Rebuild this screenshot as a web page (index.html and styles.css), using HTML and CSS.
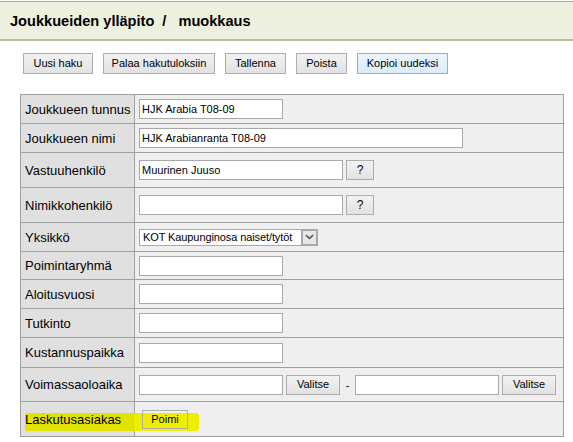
FILE: index.html
```html
<!DOCTYPE html>
<html lang="fi">
<head>
<meta charset="utf-8">
<title>Joukkueiden ylläpito / muokkaus</title>
<link rel="stylesheet" href="styles.css">
</head>
<body>
<header class="page-header">
  <h1 class="title">Joukkueiden ylläpito<span class="sep">/</span>muokkaus</h1>
</header>

<div class="toolbar">
  <button class="btn b-uusi">Uusi haku</button>
  <button class="btn b-palaa">Palaa hakutuloksiin</button>
  <button class="btn b-tallenna">Tallenna</button>
  <button class="btn b-poista">Poista</button>
  <button class="btn btn-active b-kopioi">Kopioi uudeksi</button>
</div>

<div class="form">
  <div class="row h29">
    <div class="label">Joukkueen tunnus</div>
    <div class="value"><input class="field w144" type="text" value="HJK Arabia T08-09"></div>
  </div>
  <div class="row h29">
    <div class="label">Joukkueen nimi</div>
    <div class="value"><input class="field w324" type="text" value="HJK Arabianranta T08-09"></div>
  </div>
  <div class="row h35">
    <div class="label">Vastuuhenkilö</div>
    <div class="value"><input class="field w204" type="text" value="Muurinen Juuso"><button class="btn btn-q">?</button></div>
  </div>
  <div class="row h35">
    <div class="label">Nimikkohenkilö</div>
    <div class="value"><input class="field w204" type="text" value=""><button class="btn btn-q">?</button></div>
  </div>
  <div class="row h29">
    <div class="label">Yksikkö</div>
    <div class="value">
      <div class="select"><span class="select-text">KOT Kaupunginosa naiset/tytöt</span><span class="select-arrow"><svg width="9" height="6" viewBox="0 0 9 6"><path d="M1 1.2 L4.5 4.5 L8 1.2" fill="none" stroke="#555" stroke-width="1.6"/></svg></span></div>
    </div>
  </div>
  <div class="row h28">
    <div class="label">Poimintaryhmä</div>
    <div class="value"><input class="field w144" type="text" value=""></div>
  </div>
  <div class="row h29">
    <div class="label">Aloitusvuosi</div>
    <div class="value"><input class="field w144" type="text" value=""></div>
  </div>
  <div class="row h29">
    <div class="label">Tutkinto</div>
    <div class="value"><input class="field w144" type="text" value=""></div>
  </div>
  <div class="row h30">
    <div class="label">Kustannuspaikka</div>
    <div class="value"><input class="field w144" type="text" value=""></div>
  </div>
  <div class="row h34">
    <div class="label">Voimassaoloaika</div>
    <div class="value">
      <input class="field w144" type="text" value=""><button class="btn btn-pick">Valitse</button><span class="dash">-</span><input class="field w144" type="text" value=""><button class="btn btn-pick">Valitse</button>
    </div>
  </div>
  <div class="row h35 marked">
    <div class="label"><span class="above">Laskutusasiakas</span></div>
    <div class="value"><button class="btn btn-poimi above">Poimi</button></div>
    <span class="marker"></span>
  </div>
</div>
</body>
</html>
```

FILE: styles.css
```css
* { box-sizing: border-box; }

body {
  margin: 0;
  font-family: "Liberation Sans", Arial, sans-serif;
  color: #000;
  background: #fff;
}

.page-header {
  margin-top: 1px;
  height: 40px;
  border-top: 1px solid #a8a8a8;
  border-bottom: 2px solid #bcbd9a;
  background: #eef0df;
  padding-left: 10px;
}

.title {
  margin: 0;
  font-size: 14.6px;
  font-weight: bold;
  line-height: 38px;
  color: #000;
}

.sep {
  margin: 0 12px 0 8px;
}

.toolbar {
  display: flex;
  gap: 10px;
  margin: 12px 0 0 23px;
  height: 21px;
}

.btn {
  margin: 0;
  height: 21px;
  padding: 0;
  border: 1px solid #adadad;
  border-radius: 0;
  background: linear-gradient(#f2f2f2, #e2e2e2);
  font-family: "Liberation Sans", Arial, sans-serif;
  font-size: 11px;
  color: #000;
  line-height: 1;
}

.b-uusi { width: 70px; }
.b-palaa { width: 112px; }
.b-tallenna { width: 61px; }
.b-poista { width: 51px; }
.b-kopioi { width: 91px; }

.btn-active {
  border-color: #7eb4ea;
  background: linear-gradient(#ecf4fc, #dcecfc);
}

.form {
  margin: 20px 0 0 20px;
  width: 544px;
  border-top: 1px solid #a0a0a0;
  border-left: 1px solid #a0a0a0;
}

.row {
  display: flex;
  position: relative;
}

.h28 { height: 28px; }
.h29 { height: 29px; }
.h30 { height: 30px; }
.h34 { height: 34px; }
.h35 { height: 35px; }

.label {
  width: 114px;
  flex: none;
  display: flex;
  align-items: center;
  padding-left: 4px;
  background: #e0e0e0;
  border-right: 1px solid #a0a0a0;
  border-bottom: 1px solid #a0a0a0;
  font-size: 13px;
  white-space: nowrap;
}

.value {
  flex: 1;
  display: flex;
  align-items: center;
  padding-left: 4px;
  background: #efefef;
  border-right: 1px solid #a0a0a0;
  border-bottom: 1px solid #a0a0a0;
}

.field {
  margin: 0;
  height: 20px;
  padding: 0 2px;
  border: 1px solid #a9a9a9;
  background: #fff;
  font-family: "Liberation Sans", Arial, sans-serif;
  font-size: 11px;
  color: #000;
  outline: none;
}

.w144 { width: 144px; }
.w204 { width: 204px; }
.w324 { width: 324px; }

.btn-q {
  width: 28px;
  height: 20px;
  margin-left: 3px;
  font-size: 12px;
}

.btn-pick {
  width: 54px;
  height: 20px;
  margin-left: 3px;
}

.dash {
  width: 15px;
  text-align: center;
  font-size: 11px;
}

.btn-poimi {
  width: 46px;
  height: 19px;
  margin-left: 3px;
  background: transparent;
}

.above {
  position: relative;
  z-index: 1;
}

.select {
  display: flex;
  align-items: stretch;
  width: 179px;
  height: 17px;
  border: 1px solid #a9a9a9;
  background: #fff;
}

.select-text {
  flex: 1;
  padding-left: 3px;
  font-size: 11px;
  line-height: 15px;
  letter-spacing: -0.1px;
  white-space: nowrap;
  overflow: hidden;
}

.select-arrow {
  width: 17px;
  flex: none;
  display: flex;
  align-items: center;
  justify-content: center;
  background: #e6e6e6;
  border: 2px solid #a9a9a9;
  margin: -1px -1px -1px 0;
}

.marker {
  position: absolute;
  z-index: 0;
  left: 4px;
  top: 11px;
  width: 174px;
  height: 18px;
  border-radius: 3px;
  background: linear-gradient(90deg, #e2e200 0, #e2e200 109px, #eeee00 110px, #eeee00 100%);
  pointer-events: none;
}
```
